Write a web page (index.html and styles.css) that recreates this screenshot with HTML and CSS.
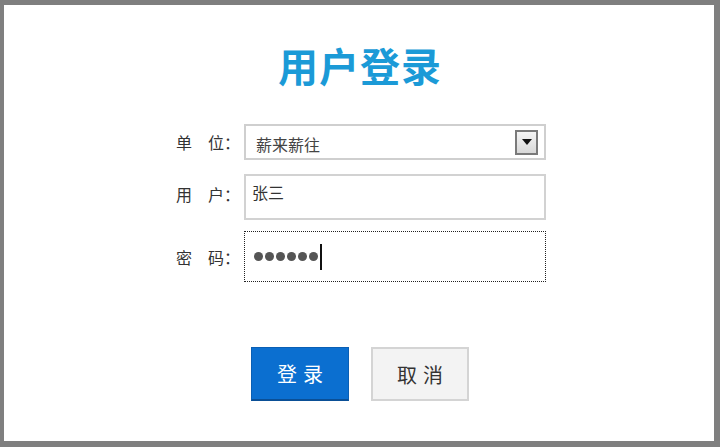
FILE: index.html
```html
<!DOCTYPE html>
<html lang="zh">
<head>
<meta charset="utf-8">
<title>用户登录</title>
<link rel="stylesheet" href="styles.css">
</head>
<body>
<div class="frame">
  <h1 class="title">用户登录</h1>
  <div class="form">
    <div class="row row-unit">
      <div class="label">单　位：</div>
      <div class="field select">
        <span class="value">薪来薪往</span>
        <span class="dropbtn"><span class="tri"></span></span>
      </div>
    </div>
    <div class="row row-user">
      <div class="label">用　户：</div>
      <div class="field input"><span class="value">张三</span></div>
    </div>
    <div class="row row-pass">
      <div class="label">密　码：</div>
      <div class="field password">
        <span class="dot"></span><span class="dot"></span><span class="dot"></span><span class="dot"></span><span class="dot"></span><span class="dot"></span><span class="caret"></span>
      </div>
    </div>
  </div>
  <div class="actions">
    <button class="btn btn-primary">登录</button>
    <button class="btn btn-default">取消</button>
  </div>
</div>
</body>
</html>
```
FILE: styles.css
```css
html, body {
  margin: 0;
  padding: 0;
  background: #7f7f7f;
}
body {
  font-family: "Noto Sans CJK SC", "Noto Sans", sans-serif;
  color: #333;
}
.frame {
  box-sizing: border-box;
  width: 710px;
  height: 436px;
  margin: 5px 6px 6px 4px;
  background: #fff;
  display: flex;
  flex-direction: column;
  align-items: center;
}
.title {
  margin: 35px 0 0 2px;
  font-size: 40px;
  line-height: 50px;
  font-weight: 700;
  color: #1b9ad7;
  letter-spacing: 1px;
}
.form {
  margin-top: 34px;
  margin-left: 4px;
  display: flex;
  flex-direction: column;
}
.row {
  display: flex;
  align-items: center;
}
.label {
  width: 68px;
  font-size: 16px;
  color: #333;
  white-space: nowrap;
}
.field {
  box-sizing: border-box;
  width: 302px;
  font-size: 16px;
  color: #333;
}
.select {
  height: 36px;
  border: 2px solid #cfcfcf;
  display: flex;
  align-items: center;
  justify-content: space-between;
  padding: 0 6px 0 10px;
}
.select .value {
  color: #444;
  padding-top: 3px;
}
.dropbtn {
  box-sizing: border-box;
  width: 23px;
  height: 25px;
  border: 2px solid #7a7a7a;
  background: linear-gradient(#f4f4f4, #d8d8d8);
  display: flex;
  align-items: center;
  justify-content: center;
}
.tri {
  width: 0;
  height: 0;
  border-left: 5px solid transparent;
  border-right: 5px solid transparent;
  border-top: 6px solid #111;
}
.row-user {
  margin-top: 14px;
}
.input {
  height: 46px;
  border: 2px solid #d2d2d2;
  padding: 4px 0 0 6px;
  align-self: flex-start;
}
.row-user .label {
  align-self: flex-start;
  padding-top: 8px;
}
.row-pass {
  margin-top: 11px;
}
.password {
  height: 51px;
  border: 1px dotted #222;
  display: flex;
  align-items: center;
  padding-left: 9px;
}
.dot {
  width: 9px;
  height: 9px;
  border-radius: 50%;
  background: #555;
  margin-right: 2px;
}
.caret {
  width: 2px;
  height: 26px;
  background: #111;
}
.actions {
  margin-top: 65px;
  margin-left: 2px;
  display: flex;
  gap: 22px;
}
.btn {
  box-sizing: border-box;
  width: 98px;
  height: 54px;
  font-family: "Noto Sans CJK SC", sans-serif;
  font-size: 20px;
  letter-spacing: 6px;
  padding: 0 0 0 6px;
  cursor: pointer;
}
.btn-primary {
  background: #0b6fd0;
  color: #fff;
  border: 1px solid #0a5fb4;
  border-bottom: 2px solid #0a4f96;
}
.btn-default {
  background: #f3f3f3;
  color: #333;
  border: 2px solid #d4d4d4;
}
```
